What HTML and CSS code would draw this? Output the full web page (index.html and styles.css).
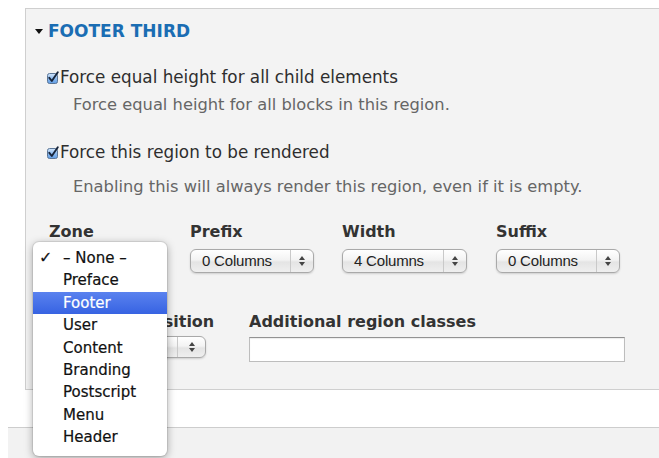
FILE: index.html
```html
<!DOCTYPE html>
<html lang="en">
<head>
<meta charset="utf-8">
<title>Region configuration</title>
<link rel="stylesheet" href="styles.css">
</head>
<body>
<div class="page">
  <section class="region">
    <h2 class="region-title">
      <svg class="caret" width="8" height="5" viewBox="0 0 8 5"><path d="M0 0H8L4 5Z" fill="#111"/></svg>
      <span>Footer third</span>
    </h2>
    <div class="region-body">
      <div class="check-item">
        <label class="check">
          <svg class="box" width="13" height="13" viewBox="0 0 13 13">
            <defs>
              <linearGradient id="cb1" x1="0" y1="0" x2="0" y2="1">
                <stop offset="0" stop-color="#d3e6fb"/>
                <stop offset="0.5" stop-color="#8fbcef"/>
                <stop offset="1" stop-color="#5f9be3"/>
              </linearGradient>
            </defs>
            <rect x="0.5" y="2.5" width="10" height="10" rx="2" fill="url(#cb1)" stroke="#5b7697"/>
            <path d="M2.3 6.8L4.8 10L10.8 1.2" fill="none" stroke="#16243a" stroke-width="1.9" stroke-linecap="round" stroke-linejoin="round"/>
          </svg>
          <span>Force equal height for all child elements</span>
        </label>
        <p class="desc">Force equal height for all blocks in this region.</p>
      </div>
      <div class="check-item second">
        <label class="check">
          <svg class="box" width="13" height="13" viewBox="0 0 13 13">
            <rect x="0.5" y="2.5" width="10" height="10" rx="2" fill="url(#cb1)" stroke="#5b7697"/>
            <path d="M2.3 6.8L4.8 10L10.8 1.2" fill="none" stroke="#16243a" stroke-width="1.9" stroke-linecap="round" stroke-linejoin="round"/>
          </svg>
          <span>Force this region to be rendered</span>
        </label>
        <p class="desc desc-wide">Enabling this will always render this region, even if it is empty.</p>
      </div>

      <div class="fields">
        <div class="field col-zone">
          <span class="field-label">Zone</span>
          <div class="select sel-zone"><span class="select-value"></span><span class="select-arrows"><svg width="6" height="10" viewBox="0 0 6 10"><path d="M0 4H6L3 0Z M0 6H6L3 10Z" fill="#444"/></svg></span></div>
        </div>
        <div class="field col-prefix">
          <span class="field-label">Prefix</span>
          <div class="select"><span class="select-value">0 Columns</span><span class="select-arrows"><svg width="6" height="10" viewBox="0 0 6 10"><path d="M0 4H6L3 0Z M0 6H6L3 10Z" fill="#444"/></svg></span></div>
        </div>
        <div class="field col-width">
          <span class="field-label">Width</span>
          <div class="select sel-width"><span class="select-value">4 Columns</span><span class="select-arrows"><svg width="6" height="10" viewBox="0 0 6 10"><path d="M0 4H6L3 0Z M0 6H6L3 10Z" fill="#444"/></svg></span></div>
        </div>
        <div class="field col-suffix">
          <span class="field-label">Suffix</span>
          <div class="select"><span class="select-value">0 Columns</span><span class="select-arrows"><svg width="6" height="10" viewBox="0 0 6 10"><path d="M0 4H6L3 0Z M0 6H6L3 10Z" fill="#444"/></svg></span></div>
        </div>
      </div>

      <div class="fields row-two">
        <div class="field col-position">
          <span class="field-label">Position</span>
          <div class="select sel-position"><span class="select-value"></span><span class="select-arrows"><svg width="6" height="10" viewBox="0 0 6 10"><path d="M0 4H6L3 0Z M0 6H6L3 10Z" fill="#444"/></svg></span></div>
        </div>
        <div class="field col-classes">
          <span class="field-label">Additional region classes</span>
          <input class="text-input" type="text">
        </div>
      </div>
    </div>
  </section>

  <div class="panel"></div>

  <ul class="popup">
    <li class="item"><span class="tick">✓</span>– None –</li>
    <li class="item"><span class="tick"></span>Preface</li>
    <li class="item active"><span class="tick"></span>Footer</li>
    <li class="item"><span class="tick"></span>User</li>
    <li class="item"><span class="tick"></span>Content</li>
    <li class="item"><span class="tick"></span>Branding</li>
    <li class="item"><span class="tick"></span>Postscript</li>
    <li class="item"><span class="tick"></span>Menu</li>
    <li class="item"><span class="tick"></span>Header</li>
  </ul>
</div>
</body>
</html>
```

FILE: styles.css
```css
html, body {
  margin: 0;
  background: #fff;
}

body {
  font-family: "DejaVu Sans", sans-serif;
  color: #333;
  overflow: hidden;
}

.page {
  position: relative;
  padding-top: 8px;
  height: 450px;
}

/* Collapsible fieldset for the region */
.region {
  margin: 0 -4px 0 25px;
  border: 1px solid #cfcfcf;
  background: #f3f3f3;
  padding: 12px 0 27px 9px;
}

.region-title {
  display: flex;
  align-items: center;
  gap: 5px;
  margin: 0;
  height: 20px;
  line-height: 20px;
  font-size: 17px;
  font-weight: bold;
  text-transform: uppercase;
  color: #1a6db3;
}

.caret {
  display: block;
}

.region-body {
  padding-left: 13px;
}

/* Checkbox items */
.check-item {
  margin-top: 26px;
}

.check-item.second {
  margin-top: 27px;
}

.check {
  display: flex;
  align-items: center;
  height: 20px;
  line-height: 20px;
  font-size: 16.8px;
  color: #2e2e2e;
  margin-left: -1px;
}

.box {
  display: block;
  overflow: visible;
  margin-right: 0;
}

.desc {
  margin: 8px 0 0 25px;
  height: 20px;
  line-height: 20px;
  font-size: 16.3px;
  color: #666;
  white-space: nowrap;
}

.desc-wide {
  margin-top: 15px;
}

/* Inline form fields */
.fields {
  display: flex;
  gap: 28px;
  margin-top: 24.5px;
  margin-left: 1px;
}

.field {
  display: flex;
  flex-direction: column;
}

.field-label {
  height: 20px;
  line-height: 20px;
  font-size: 16px;
  font-weight: bold;
  color: #333;
  white-space: nowrap;
}

.col-zone { width: 113px; }
.col-prefix { width: 124px; }
.col-width { width: 126px; }
.col-suffix { width: 124px; }

.select {
  display: flex;
  align-items: stretch;
  box-sizing: border-box;
  width: 124px;
  height: 24px;
  margin-top: 7px;
  border: 1px solid #a9a9a9;
  border-radius: 6px;
  background: linear-gradient(#ffffff, #f3f3f3 45%, #e4e4e4 55%, #efefef);
  box-shadow: 0 1px 2px rgba(0, 0, 0, 0.15);
  font-family: "Liberation Sans", Arial, sans-serif;
  font-size: 15px;
  letter-spacing: -0.2px;
  color: #222;
}

.sel-zone { width: 112px; }
.sel-width { width: 125px; }

.select-value {
  flex: 1;
  padding-left: 11px;
  line-height: 22px;
  white-space: nowrap;
}

.select-arrows {
  display: flex;
  align-items: center;
  justify-content: center;
  width: 22px;
  border-left: 1px solid #c9c9c9;
}

.select-arrows svg {
  display: block;
}

/* Second row: position and classes */
.row-two {
  margin-top: 39px;
  margin-left: 93px;
  gap: 35px;
}

.col-position { width: 73px; }

.sel-position {
  width: 65px;
  height: 22px;
  margin-top: 4.5px;
}

.sel-position .select-arrows {
  width: 27px;
}

.sel-position .select-value {
  line-height: 20px;
}

.text-input {
  box-sizing: border-box;
  width: 376px;
  height: 25px;
  margin: 5.5px 0 0;
  border: 1px solid #bdbdbd;
  border-top-color: #929292;
  background: #fff;
  box-shadow: inset 0 1px 1px rgba(0, 0, 0, 0.08);
  padding: 0 4px;
}

/* Next fieldset peeking in below */
.panel {
  margin: 37px 0 0 8px;
  height: 40px;
  border-top: 1px solid #cdcdcd;
  background: #f2f2f2;
}

/* Open option list of the zone select */
.popup {
  position: absolute;
  left: 33px;
  top: 242px;
  width: 134px;
  height: 214px;
  box-sizing: border-box;
  margin: 0;
  padding: 5px 0 0;
  list-style: none;
  background: #fff;
  border-radius: 6px;
  box-shadow: 0 2px 9px rgba(0, 0, 0, 0.35), 0 0 0 1px rgba(0, 0, 0, 0.08);
  font-size: 15px;
  color: #111;
}

.item {
  display: flex;
  align-items: center;
  height: 22.4px;
  line-height: 22.4px;
  white-space: nowrap;
  -webkit-text-stroke: 0.2px currentColor;
}

.tick {
  box-sizing: border-box;
  width: 30px;
  padding-left: 6px;
  font-size: 16px;
  font-weight: bold;
  color: #111;
}

.item.active {
  background: linear-gradient(#5a82ef, #3763e2);
  color: #fff;
}
```
